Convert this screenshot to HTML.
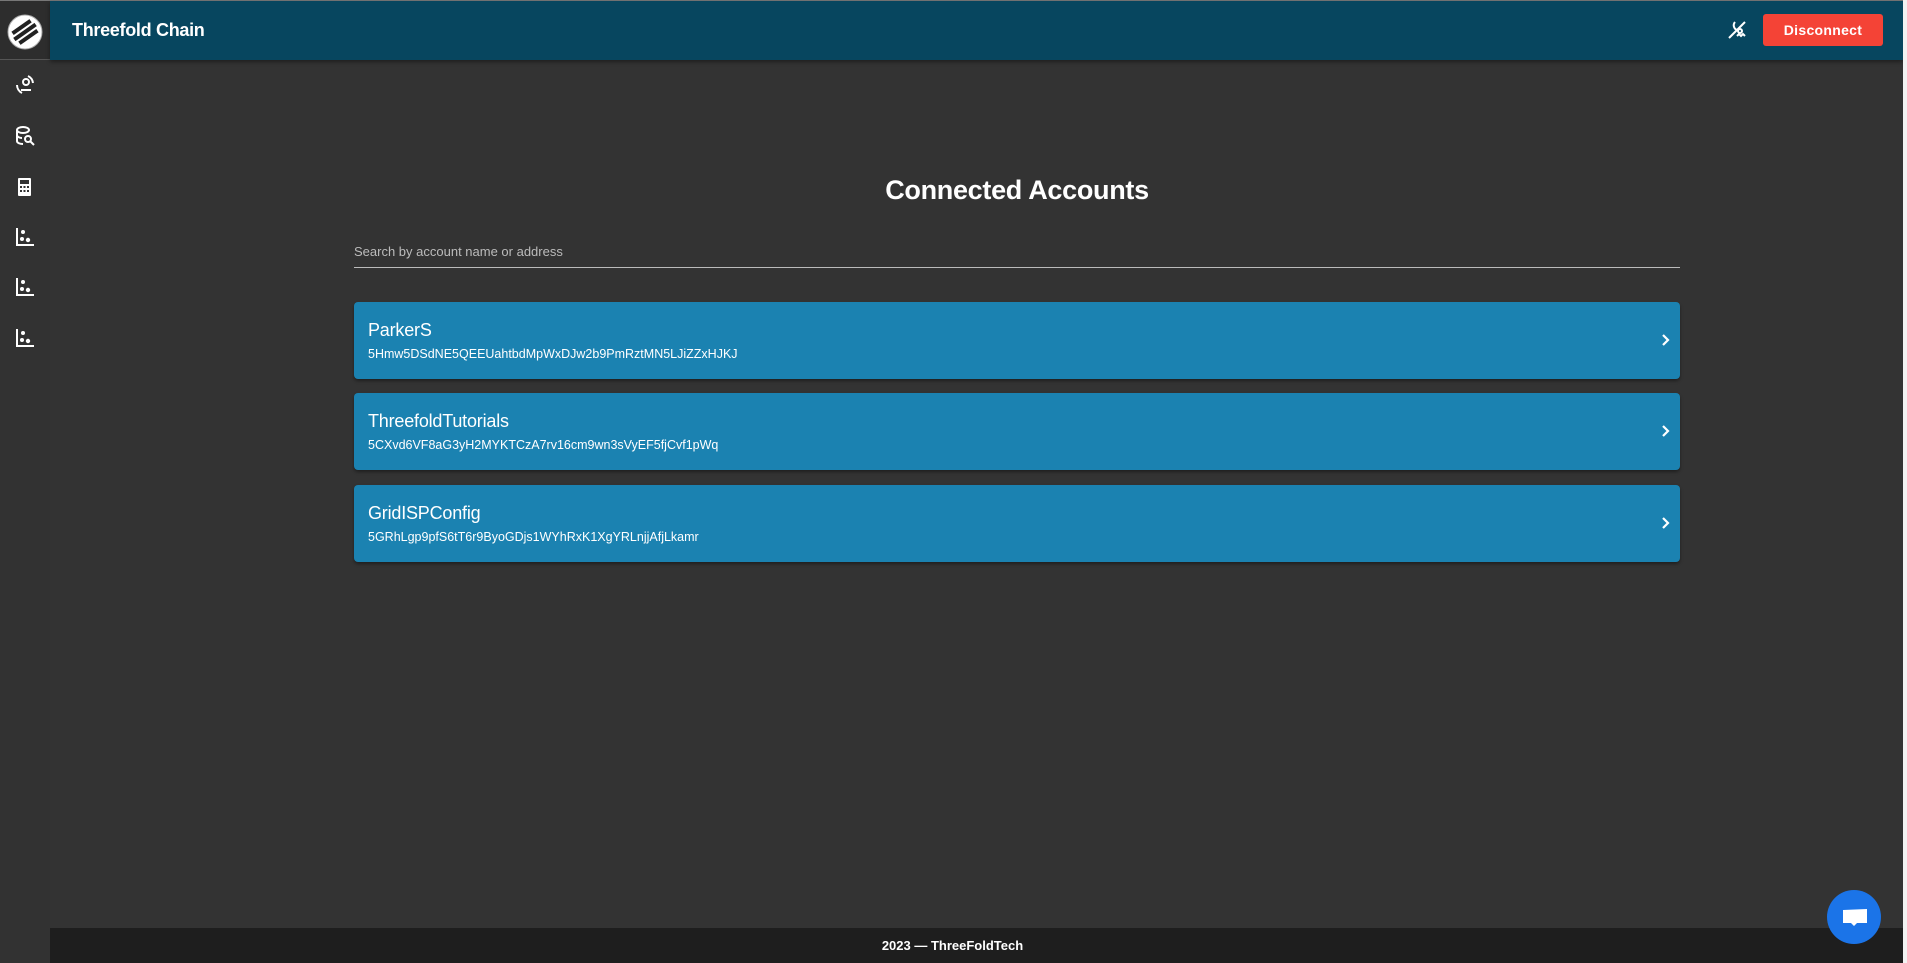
<!DOCTYPE html>
<html><head><meta charset="utf-8"><style>
*{box-sizing:border-box;margin:0;padding:0}
body{width:1907px;height:963px;background:#333;font-family:"Liberation Sans",sans-serif;color:#fff;position:relative;overflow:hidden}
.topline{position:absolute;left:0;top:0;width:1907px;height:1px;background:#777}
.rightstrip{position:absolute;right:0;top:0;width:4px;height:963px;background:#f2f2f2}
.side{position:absolute;left:0;top:1px;width:50px;height:962px;background:#323232}
.logo{position:absolute;left:0;top:0;width:50px;height:59px;background:#2d2d2d;border-bottom:1px solid #555}
.hdr{position:absolute;left:50px;top:1px;width:1853px;height:59px;background:#07465f;box-shadow:0 2px 4px rgba(0,0,0,.4)}
.hdr .t{position:absolute;left:22px;top:19px;font-size:18px;font-weight:bold;letter-spacing:-.3px}
.btn{position:absolute;left:1713px;top:13px;width:120px;height:32px;background:#f44336;border-radius:3px;font-size:14px;font-weight:bold;text-align:center;line-height:32px;letter-spacing:.3px}
h1{position:absolute;left:0;width:2034px;top:175px;text-align:center;font-size:27px;font-weight:bold;letter-spacing:-.3px}
.search{position:absolute;left:354px;top:244px;width:1326px;height:24px;border-bottom:1px solid #bbb;font-size:13px;color:#bbb}
.card{position:absolute;left:354px;width:1326px;height:77px;background:#1b82b1;border-radius:4px;box-shadow:0 2px 3px rgba(0,0,0,.4)}
.card .n{position:absolute;left:14px;top:18px;font-size:18px;letter-spacing:-.2px}
.card .a{position:absolute;left:14px;top:45px;font-size:12.5px}
.card svg{position:absolute;right:8px;top:31px}
.foot{position:absolute;left:50px;top:928px;width:1853px;height:35px;background:#1e1e1e;text-align:center;font-size:13px;font-weight:bold;line-height:35px;padding-right:48px}
.chat{position:absolute;left:1827px;top:890px;width:54px;height:54px;border-radius:50%;background:#1b74e8}
.ic{position:absolute;left:13px}
</style></head><body>
<div class="topline"></div>
<div class="side">
 <div class="logo"><svg width="50" height="59"><circle cx="25" cy="31" r="17" fill="#fff" stroke="#aaa"/><g transform="rotate(-35 25 31)" fill="#222"><rect x="14" y="23" width="22" height="4"/><rect x="12" y="29" width="26" height="4"/><rect x="14" y="35" width="22" height="4"/></g></svg></div>
 <svg class="ic" style="top:72px" width="24" height="24" fill="none" stroke="#fff" stroke-width="2"><circle cx="13" cy="9" r="3"/><path d="M8 17h10M4 12a9 9 0 0 0 5 8M20 10a9 9 0 0 0-5-7"/></svg>
 <svg class="ic" style="top:123px" width="24" height="24" fill="none" stroke="#fff" stroke-width="2"><ellipse cx="10" cy="6" rx="6" ry="3"/><path d="M4 6v11c0 2 3 3 6 3M4 11c0 2 3 3 5 3"/><circle cx="15" cy="15" r="3"/><path d="M17 17l4 4"/></svg>
 <svg class="ic" style="top:174px" width="24" height="24"><rect x="5" y="3" width="13" height="18" rx="1" fill="#fff"/><rect x="7" y="5" width="9" height="4" fill="#333"/><g fill="#333"><rect x="7" y="11" width="2" height="2"/><rect x="10.5" y="11" width="2" height="2"/><rect x="14" y="11" width="2" height="2"/><rect x="7" y="15" width="2" height="2"/><rect x="10.5" y="15" width="2" height="2"/><rect x="14" y="15" width="2" height="2"/></g></svg>
 <svg class="ic" style="top:224px" width="24" height="24" fill="#fff"><path d="M3 3h2v16h16v2H3z"/><circle cx="10" cy="7" r="2"/><circle cx="9" cy="14" r="2"/><circle cx="15" cy="15" r="2.2"/></svg>
 <svg class="ic" style="top:274px" width="24" height="24" fill="#fff"><path d="M3 3h2v16h16v2H3z"/><circle cx="10" cy="7" r="2"/><circle cx="9" cy="14" r="2"/><circle cx="15" cy="15" r="2.2"/></svg>
 <svg class="ic" style="top:325px" width="24" height="24" fill="#fff"><path d="M3 3h2v16h16v2H3z"/><circle cx="10" cy="7" r="2"/><circle cx="9" cy="14" r="2"/><circle cx="15" cy="15" r="2.2"/></svg>
</div>
<div class="hdr"><div class="t">Threefold Chain</div>
 <svg style="position:absolute;left:1675px;top:17px" width="24" height="24" fill="none" stroke="#fff" stroke-width="2"><path d="M4 20L20 4"/><path d="M10 4a5 5 0 0 0 2 8" /><path d="M12 18l2-2 2 2 2-2 2 2"/><circle cx="15" cy="13" r="2"/></svg>
 <div class="btn">Disconnect</div></div>
<div class="rightstrip"></div>
<h1>Connected Accounts</h1>
<div class="search">Search by account name or address</div>
<div class="card" style="top:302px"><div class="n">ParkerS</div><div class="a">5Hmw5DSdNE5QEEUahtbdMpWxDJw2b9PmRztMN5LJiZZxHJKJ</div><svg width="12" height="14"><path d="M3 2l5 5-5 5" stroke="#fff" stroke-width="2.2" fill="none"/></svg></div>
<div class="card" style="top:393px"><div class="n">ThreefoldTutorials</div><div class="a">5CXvd6VF8aG3yH2MYKTCzA7rv16cm9wn3sVyEF5fjCvf1pWq</div><svg width="12" height="14"><path d="M3 2l5 5-5 5" stroke="#fff" stroke-width="2.2" fill="none"/></svg></div>
<div class="card" style="top:485px"><div class="n">GridISPConfig</div><div class="a">5GRhLgp9pfS6tT6r9ByoGDjs1WYhRxK1XgYRLnjjAfjLkamr</div><svg width="12" height="14"><path d="M3 2l5 5-5 5" stroke="#fff" stroke-width="2.2" fill="none"/></svg></div>
<div class="foot">2023 — ThreeFoldTech</div>
<div class="chat"><svg width="54" height="54"><path d="M16 20l24-1 0 14-10 0-3 3-3-3-8 0z" fill="#fff"/></svg></div>
</body></html>
